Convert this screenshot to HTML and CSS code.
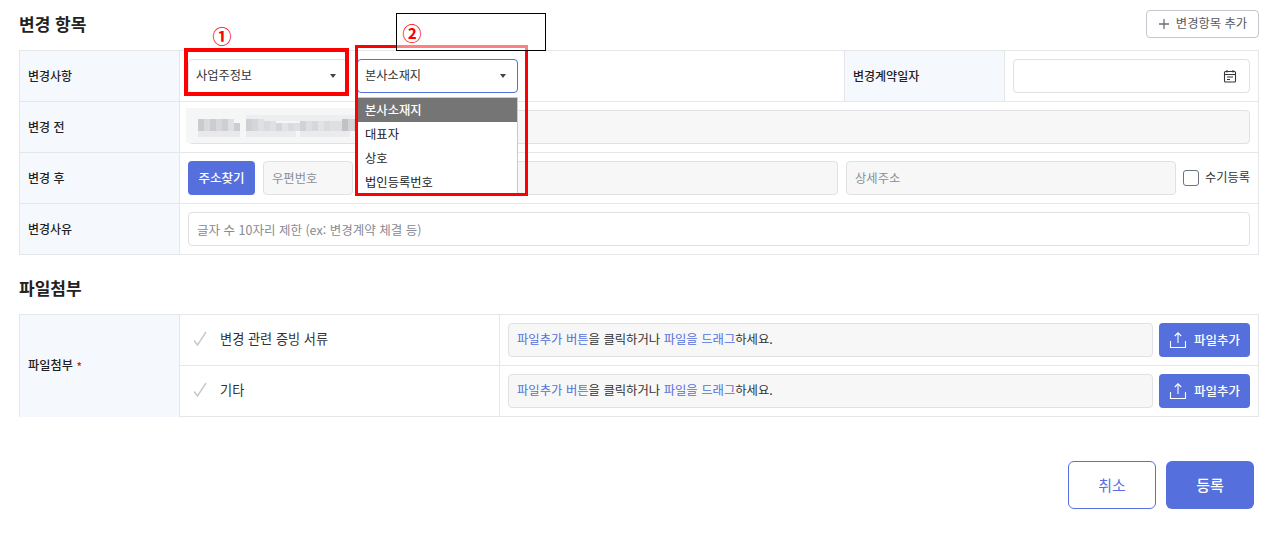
FILE: index.html
```html
<!DOCTYPE html>
<html lang="ko">
<head>
<meta charset="utf-8">
<title>변경 항목</title>
<link rel="stylesheet" href="styles.css">
</head>
<body>
<main class="page">
  <div class="section-head">
    <h2 class="title">변경 항목</h2>
    <button class="add-btn"><svg class="plus" width="12" height="12" viewBox="0 0 12 12"><path d="M6 1v10M1 6h10" stroke="#6b7078" stroke-width="1.3" fill="none"/></svg>변경항목 추가</button>
  </div>
  <div class="tbl">
    <div class="row">
      <div class="th">변경사항</div>
      <div class="td grow">
        <div class="select first">사업주정보<i class="caret"></i></div>
        <div class="select open">본사소재지<i class="caret"></i></div>
      </div>
      <div class="th th-mid">변경계약일자</div>
      <div class="td date-td">
        <div class="input date"><svg width="14" height="14" viewBox="0 0 14 14" fill="none" stroke="#33373d" stroke-width="1.1"><rect x="1.5" y="2.5" width="11" height="10.5" rx="1"/><path d="M1.5 5.5h11M4 1v2.5M10 1v2.5M4 8h6M4 10.5h3"/></svg></div>
      </div>
    </div>
    <div class="row">
      <div class="th">변경 전</div>
      <div class="td grow"><div class="input disabled full"></div></div>
    </div>
    <div class="row">
      <div class="th">변경 후</div>
      <div class="td grow">
        <button class="primary find">주소찾기</button>
        <div class="input disabled zip">우편번호</div>
        <div class="input disabled addr"></div>
        <div class="input disabled detail">상세주소</div>
        <label class="manual"><i class="box"></i>수기등록</label>
      </div>
    </div>
    <div class="row">
      <div class="th">변경사유</div>
      <div class="td grow"><div class="input full placeholder">글자 수 10자리 제한 (ex: 변경계약 체결 등)</div></div>
    </div>
  </div>

  <h2 class="title title-files">파일첨부</h2>
  <div class="tbl files">
    <div class="th th-files">파일첨부<span class="req">*</span></div>
    <div class="file-rows">
      <div class="row">
        <div class="td doc"><svg width="14" height="16" viewBox="0 0 14 16" fill="none" stroke="#c4c7cc" stroke-width="1.4"><path d="M1 9.5l3.5 4.5L13 1"/></svg>변경 관련 증빙 서류</div>
        <div class="td grow">
          <div class="input disabled drop"><span class="link">파일추가 버튼</span>을 클릭하거나 <span class="link">파일을 드래그</span>하세요.</div>
          <button class="primary upload"><svg width="18" height="18" viewBox="0 0 18 18" fill="none" stroke="#fff" stroke-width="1.1"><path d="M9 12V2M5.8 5L9 1.8 12.2 5M1.5 10v6.5h15V10"/></svg>파일추가</button>
        </div>
      </div>
      <div class="row">
        <div class="td doc"><svg width="14" height="16" viewBox="0 0 14 16" fill="none" stroke="#c4c7cc" stroke-width="1.4"><path d="M1 9.5l3.5 4.5L13 1"/></svg>기타</div>
        <div class="td grow">
          <div class="input disabled drop"><span class="link">파일추가 버튼</span>을 클릭하거나 <span class="link">파일을 드래그</span>하세요.</div>
          <button class="primary upload"><svg width="18" height="18" viewBox="0 0 18 18" fill="none" stroke="#fff" stroke-width="1.1"><path d="M9 12V2M5.8 5L9 1.8 12.2 5M1.5 10v6.5h15V10"/></svg>파일추가</button>
        </div>
      </div>
    </div>
  </div>

  <div class="actions">
    <button class="action cancel">취소</button>
    <button class="action submit">등록</button>
  </div>
</main>

<svg class="mosaic" width="172" height="35" viewBox="0 0 172 35" aria-hidden="true">
  <rect width="172" height="35" fill="#f5f6f6"/>
  <g shape-rendering="crispEdges">
    <rect x="60" y="7" width="112" height="6" fill="#edeef0"/>
    <rect x="12" y="11" width="6" height="12" fill="#cbcbcf"/><rect x="18" y="11" width="6" height="12" fill="#dadadd"/><rect x="24" y="11" width="6" height="12" fill="#cdcdd1"/><rect x="30" y="11" width="6" height="12" fill="#d8d8db"/><rect x="36" y="11" width="6" height="12" fill="#cfcfd3"/><rect x="42" y="11" width="6" height="12" fill="#dfe0e2"/><rect x="48" y="15" width="6" height="8" fill="#cbced0"/>
    <rect x="60" y="11" width="6" height="12" fill="#d0d0d4"/><rect x="66" y="11" width="6" height="12" fill="#d6d6da"/><rect x="72" y="11" width="6" height="12" fill="#e0e0e3"/><rect x="78" y="13" width="6" height="10" fill="#d9dade"/><rect x="84" y="13" width="6" height="10" fill="#dfe0e3"/><rect x="90" y="15" width="6" height="8" fill="#d5d6d9"/><rect x="96" y="15" width="6" height="8" fill="#e2e3e6"/><rect x="102" y="15" width="6" height="8" fill="#d9dadd"/><rect x="108" y="15" width="6" height="8" fill="#dde0e2"/><rect x="114" y="13" width="6" height="10" fill="#d0d3d6"/><rect x="120" y="13" width="6" height="10" fill="#dcdee1"/><rect x="126" y="13" width="6" height="10" fill="#d5d7da"/><rect x="132" y="13" width="6" height="10" fill="#e3e3e6"/><rect x="138" y="13" width="6" height="10" fill="#dadbdd"/><rect x="144" y="13" width="6" height="10" fill="#e0e0e3"/><rect x="150" y="13" width="6" height="10" fill="#dfdfe1"/><rect x="156" y="11" width="6" height="12" fill="#c2c1c6"/><rect x="162" y="11" width="6" height="12" fill="#d5d5d8"/><rect x="168" y="11" width="4" height="12" fill="#c9c9cd"/>
    <rect x="12" y="23" width="42" height="6" fill="#e9e9ec"/><rect x="60" y="23" width="50" height="6" fill="#eaebed"/><rect x="114" y="23" width="50" height="6" fill="#ebebed"/>
  </g>
</svg>

<div class="dropdown">
  <div class="opt selected">본사소재지</div>
  <div class="opt">대표자</div>
  <div class="opt">상호</div>
  <div class="opt">법인등록번호</div>
</div>

<div class="mark mark-1"></div>
<div class="mark mark-2"></div>
<div class="note"></div>
<span class="num num-1">①</span>
<span class="num num-2">②</span>
</body>
</html>
```
FILE: styles.css
```css
* { box-sizing: border-box; }
html, body { margin: 0; padding: 0; }
body {
  background: #fff;
  color: #222;
  font-family: "Noto Sans CJK KR", "Noto Sans", sans-serif;
  font-size: 12px;
  height: 545px;
  overflow: hidden;
  position: relative;
}
button { font-family: inherit; cursor: pointer; }
.page { padding: 10px 25px 0 19px; }
.section-head {
  display: flex;
  justify-content: space-between;
  align-items: center;
  height: 28px;
  margin-bottom: 12px;
}
.title { margin: 0; font-size: 17px; font-weight: 700; color: #222; line-height: 28px; height: 28px; }
.title-files { margin: 19px 0 12px; }
.add-btn {
  width: 113px;
  height: 28px;
  background: #fff;
  border: 1px solid #c5c7cf;
  border-radius: 4px;
  color: #555a63;
  font-size: 12.3px;
  display: flex;
  align-items: center;
  justify-content: center;
  gap: 6px;
  padding: 0 0 2px;
}
.plus { margin-top: 2px; }
.tbl { border: 1px solid #e4e6ea; border-bottom: 0; }
.row { display: flex; height: 51px; border-bottom: 1px solid #e4e6ea; }
.th {
  width: 160px;
  flex: none;
  background: #f5f8fd;
  border-right: 1px solid #e4e6ea;
  display: flex;
  align-items: center;
  padding: 0 0 2px 8px;
  font-weight: 500;
  color: #222;
}
.th-mid { border-left: 1px solid #e4e6ea; width: 161px; }
.td { display: flex; align-items: center; padding: 0 8px; }
.grow { flex: 1; min-width: 0; }
.date-td { width: 253px; flex: none; }
.input {
  height: 34px;
  border: 1px solid #dfe1e5;
  border-radius: 4px;
  background: #fff;
  display: flex;
  align-items: center;
  padding: 0 8px;
  color: #8a8e96;
  font-size: 12.3px;
}
.disabled { background: #f7f7f7; }
.full { width: 100%; }
.placeholder { color: #878b93; font-size: 12.5px; }
.select {
  width: 161px;
  height: 34px;
  border: 1px solid #dfe1e5;
  border-radius: 4px;
  background: #fff;
  display: flex;
  align-items: center;
  justify-content: space-between;
  padding: 0 11px 2px 7px;
  color: #333;
  font-size: 12.2px;
}
.select.first { width: 160px; margin-right: 9px; }
.select.open { border-color: #5570dc; }
.caret {
  width: 0;
  height: 0;
  margin-top: 2px;
  border-left: 3.5px solid transparent;
  border-right: 3.5px solid transparent;
  border-top: 4px solid #444;
}
.date { width: 100%; justify-content: flex-end; padding: 0 12px 0 0; }
.primary {
  background: #5570dc;
  color: #fff;
  border: 0;
  border-radius: 4px;
  font-size: 12.5px;
  font-weight: 500;
  height: 34px;
  padding: 0 0 2px;
}
.find { width: 67px; margin-right: 8px; flex: none; }
.zip { width: 90px; margin-right: 8px; flex: none; }
.addr { width: 477px; margin-right: 8px; flex: none; }
.detail { width: 330px; flex: none; }
.manual { display: flex; align-items: center; margin-left: 7px; padding-bottom: 2px; color: #333; white-space: nowrap; font-size: 12.2px; }
.box {
  width: 16px;
  height: 16px;
  margin: 2px 6px 0 0;
  border: 1px solid #6b7280;
  border-radius: 3px;
  flex: none;
}
.files { display: flex; }
.th-files { width: 160px; font-size: 12.2px; }
.req { color: #e02020; margin-left: 4px; font-weight: 700; font-size: 10px; }
.file-rows { flex: 1; min-width: 0; }
.doc {
  width: 320px;
  flex: none;
  border-right: 1px solid #e4e6ea;
  padding: 0 0 4px 13px;
  gap: 13px;
  font-size: 13.2px;
  color: #333;
}
.doc svg { margin-top: 2px; }
.drop { flex: 1; color: #333; min-width: 0; white-space: pre-wrap; font-size: 12.35px; padding-bottom: 2px; }
.link { color: #5570dc; }
.upload {
  width: 91px;
  margin-left: 6px;
  flex: none;
  display: flex;
  align-items: center;
  justify-content: center;
  gap: 7px;
}
.upload svg { margin-top: 2px; }
.actions {
  display: flex;
  justify-content: flex-end;
  gap: 10px;
  margin-top: 44px;
  padding-right: 5px;
}
.action {
  width: 88px;
  height: 48px;
  border-radius: 6px;
  font-size: 15px;
  padding: 0 0 2px;
}
.cancel { background: #fff; border: 1px solid #5570dc; color: #5570dc; }
.submit { background: #5570dc; border: 0; color: #fff; font-weight: 500; }

/* overlays: open list, annotation marks and the blur over private data */
.mosaic { position: absolute; left: 186px; top: 108px; }
.dropdown {
  position: absolute;
  left: 356px;
  top: 97px;
  width: 162px;
  height: 98px;
  background: #fff;
  border: 1px solid #c8c9cc;
  border-bottom: 0;
  overflow: hidden;
  font-size: 12.3px;
}
.opt { height: 24px; line-height: 24px; padding-left: 8px; color: #222; }
.selected { background: #757575; color: #fff; font-weight: 500; }
.mark { position: absolute; border: 4px solid #f00; }
.mark-1 { left: 184px; top: 48px; width: 165px; height: 48px; }
.mark-2 { left: 355px; top: 45px; width: 173px; height: 151px; border-width: 3px; }
.note {
  position: absolute;
  left: 396px;
  top: 13px;
  width: 150px;
  height: 38px;
  border: 1px solid #000;
  background: rgba(255, 255, 255, 0.5);
}
.num {
  position: absolute;
  color: #f00;
  font-size: 19px;
  font-weight: 700;
  line-height: 20px;
  width: 20px;
  text-align: center;
}
.num-1 { left: 212px; top: 26px; }
.num-2 { left: 402px; top: 23px; }
```
